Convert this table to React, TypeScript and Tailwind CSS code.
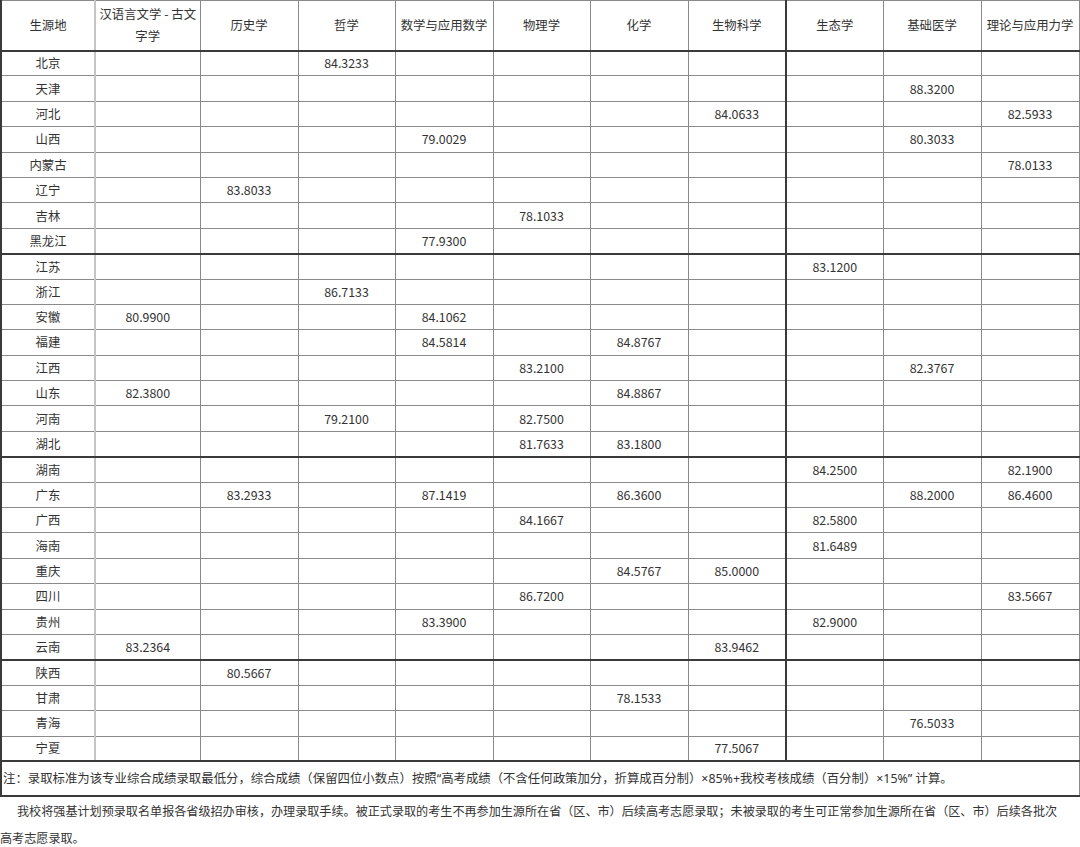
import React from "react";

const subjects = [
  "汉语言文学 - 古文字学",
  "历史学",
  "哲学",
  "数学与应用数学",
  "物理学",
  "化学",
  "生物科学",
  "生态学",
  "基础医学",
  "理论与应用力学",
];

const widths = ["w-[94px]", "w-[105px]", "w-[98px]", "w-[97px]", "w-[98px]", "w-[97px]", "w-[98px]", "w-[98px]", "w-[97px]", "w-[98px]", "w-[98px]"];

// [province, {column index: score}, thick bottom line]
const rows: [string, Record<number, string>, boolean?][] = [
  ["北京", { 2: "84.3233" }],
  ["天津", { 8: "88.3200" }],
  ["河北", { 6: "84.0633", 9: "82.5933" }],
  ["山西", { 3: "79.0029", 8: "80.3033" }],
  ["内蒙古", { 9: "78.0133" }],
  ["辽宁", { 1: "83.8033" }],
  ["吉林", { 4: "78.1033" }],
  ["黑龙江", { 3: "77.9300" }, true],
  ["江苏", { 7: "83.1200" }],
  ["浙江", { 2: "86.7133" }],
  ["安徽", { 0: "80.9900", 3: "84.1062" }],
  ["福建", { 3: "84.5814", 5: "84.8767" }],
  ["江西", { 4: "83.2100", 8: "82.3767" }],
  ["山东", { 0: "82.3800", 5: "84.8867" }],
  ["河南", { 2: "79.2100", 4: "82.7500" }],
  ["湖北", { 4: "81.7633", 5: "83.1800" }, true],
  ["湖南", { 7: "84.2500", 9: "82.1900" }],
  ["广东", { 1: "83.2933", 3: "87.1419", 5: "86.3600", 8: "88.2000", 9: "86.4600" }],
  ["广西", { 4: "84.1667", 7: "82.5800" }],
  ["海南", { 7: "81.6489" }],
  ["重庆", { 5: "84.5767", 6: "85.0000" }],
  ["四川", { 4: "86.7200", 9: "83.5667" }],
  ["贵州", { 3: "83.3900", 7: "82.9000" }],
  ["云南", { 0: "83.2364", 6: "83.9462" }, true],
  ["陕西", { 1: "80.5667" }],
  ["甘肃", { 5: "78.1533" }],
  ["青海", { 8: "76.5033" }],
  ["宁夏", { 6: "77.5067" }, true],
];

function cellBorder(col: number) {
  if (col === 0) return "border-l-2 border-l-[#3a3a3a] border-r-2 border-r-[#c4c4c4]";
  if (col === 8) return "border-r border-r-[#8a8a8a] border-l-2 border-l-[#3a3a3a]";
  return "border-r border-r-[#8a8a8a]";
}

// latin punctuation in a narrow face, like the original page
const L = ({ children }: { children: React.ReactNode }) => (
  <span style={{ fontFamily: '"Noto Sans", sans-serif' }}>{children}</span>
);

export default function App() {
  return (
    <div className="w-[1080px] bg-white text-[#333] text-[12.4px]" style={{ fontFamily: '"Noto Sans CJK SC", "Noto Sans", sans-serif' }}>
      <table className="table-fixed w-[1079px] border-collapse border-t border-t-[#8a8a8a]">
        <colgroup>
          {widths.map((w, i) => (
            <col key={i} className={w} />
          ))}
        </colgroup>
        <thead>
          <tr className="h-[50px]">
            <th className={`font-normal text-center align-middle leading-[22px] p-0 border-b-2 border-b-[#3a3a3a] ${cellBorder(0)}`}>生源地</th>
            {subjects.map((s, i) => (
              <th key={s} className={`font-normal text-center align-middle leading-[22px] p-0 border-b-2 border-b-[#3a3a3a] ${cellBorder(i + 1)}`}>
                {s}
              </th>
            ))}
          </tr>
        </thead>
        <tbody>
          {rows.map(([name, scores, thick]) => (
            <tr key={name} className="h-[25.4px]">
              {[name, ...subjects.map((_, i) => scores[i] ?? "")].map((v, c) => (
                <td
                  key={c}
                  className={`text-center align-middle leading-[18px] p-0 ${cellBorder(c)} ${thick ? "border-b-2 border-b-[#3a3a3a]" : "border-b border-b-[#8a8a8a]"}`}
                >
                  {v}
                </td>
              ))}
            </tr>
          ))}
          <tr className="h-[35px]">
            <td colSpan={11} className="p-0 pl-[1px] text-left align-middle border-l-2 border-l-[#3a3a3a] border-r border-r-[#8a8a8a] border-b-2 border-b-[#3a3a3a]">
              注：录取标准为该专业综合成绩录取最低分，综合成绩（保留四位小数点）按照<L>“</L>高考成绩（不含任何政策加分，折算成百分制）<L>×85%+</L>我校考核成绩（百分制）<L>×15%” </L>计算。
            </td>
          </tr>
        </tbody>
      </table>
      <p className="leading-[27px] indent-[17px] text-[12.1px]">
        <span className="whitespace-nowrap">
          我校将强基计划预录取名单报各省级招办审核，办理录取手续。被正式录取的考生不再参加生源所在省（区、市）后续高考志愿录取；未被录取的考生可正常参加生源所在省（区、市）后续各批次
        </span>
        <br />
        高考志愿录取。
      </p>
    </div>
  );
}
